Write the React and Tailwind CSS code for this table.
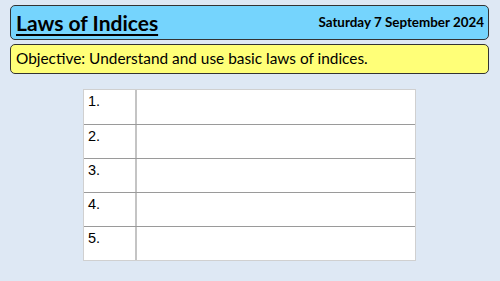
export default function App() {
  const rows = ["1.", "2.", "3.", "4.", "5."];
  return (
    <div className="w-[500px] h-[281px] bg-[#dee8f4] overflow-hidden pt-[5px] pl-[10px] pr-[11px] flex flex-col" style={{ fontFamily: "Lato, 'Noto Sans', sans-serif" }}>
      <div className="h-[35px] bg-[#75d4fd] border-[1.5px] border-[#333] rounded-[5px] flex items-center justify-between pl-[5px] pr-[4px]">
        <span className="text-[21px] font-bold underline decoration-[2px] underline-offset-[3px] text-black leading-none">Laws of Indices</span>
        <span className="text-[13.4px] font-bold text-black leading-none">Saturday 7 September 2024</span>
      </div>
      <div className="mt-[4px] h-[30px] bg-[#ffff78] border-[1.5px] border-[#333] rounded-[5px] flex items-center pl-[5px]">
        <span className="text-[15.4px] text-black leading-none">Objective: Understand and use basic laws of indices.</span>
      </div>
      <div className="mt-[15px] ml-[73px] w-[333px] bg-white border border-[#d0d0d0]" style={{ fontFamily: "'Liberation Sans', Arial, sans-serif" }}>
        {rows.map((r, i) => (
          <div key={r} className={"flex h-[34px] " + (i > 0 ? "border-t border-[#9a9a9a]" : "")}>
            <div className="w-[53px] border-r-2 border-[#c4c4c4] pl-[4px] pt-[4px] text-[14.5px] text-black leading-none">{r}</div>
            <div className="flex-1" />
          </div>
        ))}
      </div>
    </div>
  );
}
